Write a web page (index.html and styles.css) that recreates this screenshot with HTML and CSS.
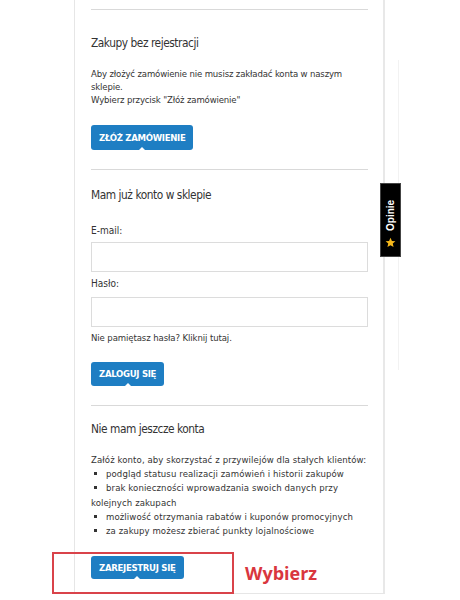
FILE: index.html
```html
<!DOCTYPE html>
<html lang="pl">
<head>
<meta charset="utf-8">
<title>Logowanie</title>
<link rel="stylesheet" href="styles.css">
</head>
<body>
<div class="page">
  <div class="card">
    <div class="rule rule-top"></div>
    <h2 class="title title-first">Zakupy bez rejestracji</h2>
    <p class="text">Aby złożyć zamówienie nie musisz zakładać konta w naszym sklepie.<br>Wybierz przycisk "Złóż zamówienie"</p>
    <div class="btn-row btn-row-order"><span class="btn">ZŁÓŻ ZAMÓWIENIE</span></div>
    <div class="rule"></div>

    <h2 class="title">Mam już konto w sklepie</h2>
    <div class="label label-email">E-mail:</div>
    <div class="input"></div>
    <div class="label label-pass">Hasło:</div>
    <div class="input input-pass"></div>
    <div class="forgot">Nie pamiętasz hasła? Kliknij tutaj.</div>
    <div class="btn-row btn-row-login"><span class="btn">ZALOGUJ SIĘ</span></div>
    <div class="rule rule-after-login"></div>

    <h2 class="title title-last">Nie mam jeszcze konta</h2>
    <div class="list">
      <div>Załóż konto, aby skorzystać z przywilejów dla stałych klientów:</div>
      <div><span class="dot"></span>podgląd statusu realizacji zamówień i historii zakupów</div>
      <div><span class="dot"></span>brak konieczności wprowadzania swoich danych przy kolejnych zakupach</div>
      <div><span class="dot"></span>możliwość otrzymania rabatów i kuponów promocyjnych</div>
      <div><span class="dot"></span>za zakupy możesz zbierać punkty lojalnościowe</div>
    </div>
    <div class="btn-row btn-row-register"><span class="btn">ZAREJESTRUJ SIĘ</span></div>
  </div>

  <div class="faint-line"></div>
  <div class="opinie-tab"><svg class="star" viewBox="0 0 24 24" width="11" height="11"><path d="M12 1.5l3.1 7.1 7.6.7-5.8 5 1.8 7.5L12 17.8l-6.7 4 1.8-7.5-5.8-5 7.6-.7z" fill="#f5b81c"/></svg><span class="opinie-text">Opinie</span></div>
  <div class="highlight"></div>
  <div class="choose">Wybierz</div>
</div>
</body>
</html>
```
FILE: styles.css
```css
html, body {
  margin: 0;
  padding: 0;
  background: #ffffff;
}
body {
  font-family: "DejaVu Sans Condensed", "DejaVu Sans", sans-serif;
  font-stretch: condensed;
  color: #333333;
  width: 460px;
  height: 600px;
  overflow: hidden;
}
.page {
  position: relative;
  width: 460px;
  height: 600px;
}
.card {
  margin-left: 74px;
  width: 277px;
  padding: 9px 15px 14px 16px;
  border-left: 1px solid #e6e6e6;
  border-right: 2px solid #e8e8e8;
  border-bottom: 1px solid #e6e6e6;
  display: flex;
  flex-direction: column;
}
.rule {
  height: 1px;
  background: #d9d9d9;
  margin-top: 19px;
}
.rule-top {
  margin-top: 0;
}
.title {
  margin: 16px 0 0;
  font-size: 11.8px;
  letter-spacing: -0.45px;
  line-height: 18px;
  font-weight: normal;
  color: #333333;
}
.title-first {
  margin-top: 24px;
}
.title-last {
  margin-top: 14px;
}
.text {
  margin: 15px 0 0;
  font-size: 9.5px;
  letter-spacing: -0.15px;
  line-height: 13px;
  padding-right: 12px;
}
.btn-row {
  display: flex;
}
.btn-row-order { margin-top: 19px; }
.btn-row-login { margin-top: 18px; }
.btn-row-register { margin-top: 18px; }
.btn {
  position: relative;
  background: #1e7ec3;
  color: #ffffff;
  font-size: 9.5px;
  font-weight: bold;
  letter-spacing: -0.3px;
  height: 25px;
  line-height: 25px;
  padding: 0 8px;
  border-radius: 3px;
}
.btn-row-login .btn { height: 24px; line-height: 24px; }
.btn-row-register .btn { height: 23px; line-height: 23px; }
.btn::after {
  content: "";
  position: absolute;
  left: 50%;
  bottom: 0;
  margin-left: -3px;
  border-left: 3px solid transparent;
  border-right: 3px solid transparent;
  border-bottom: 3px solid #ffffff;
}
.label {
  font-size: 10px;
  line-height: 14px;
  margin-top: 20px;
}
.label-pass { margin-top: 5px; }
.input {
  height: 28px;
  border: 1px solid #dcdcdc;
  margin-top: 4px;
  background: #ffffff;
}
.input-pass { margin-top: 6px; }
.forgot {
  font-size: 9.5px;
  letter-spacing: -0.1px;
  line-height: 13px;
  margin-top: 4px;
}
.list {
  margin-top: 15px;
  font-size: 9.5px;
  letter-spacing: 0.1px;
  line-height: 14.2px;
}
.dot {
  display: inline-block;
  width: 3px;
  height: 3px;
  background: #333333;
  margin: 0 9px 2px 3px;
  vertical-align: middle;
}
.faint-line {
  position: absolute;
  left: 398px;
  top: 60px;
  width: 0;
  height: 310px;
  border-left: 1px solid #f2f2f2;
}
.opinie-tab {
  position: absolute;
  left: 380px;
  top: 183px;
  width: 21px;
  height: 74px;
  box-sizing: border-box;
  background: #000000;
  border: 1px solid #444444;
  writing-mode: vertical-rl;
  transform: rotate(180deg);
  display: flex;
  align-items: center;
  justify-content: flex-start;
  padding-top: 8px;
  gap: 6px;
}
.star {
  transform: rotate(180deg);
}
.opinie-text {
  font-family: "Liberation Sans", Arial, sans-serif;
  font-stretch: normal;
  color: #ffffff;
  font-weight: bold;
  font-size: 10px;
  line-height: 12px;
}
.highlight {
  position: absolute;
  left: 52px;
  top: 552px;
  width: 178px;
  height: 38px;
  border: 2px solid #d9434a;
}
.choose {
  position: absolute;
  left: 245px;
  top: 561px;
  font-family: "Open Sans", sans-serif;
  font-stretch: normal;
  font-weight: bold;
  font-size: 18px;
  line-height: 24px;
  color: #d9363e;
}
```
